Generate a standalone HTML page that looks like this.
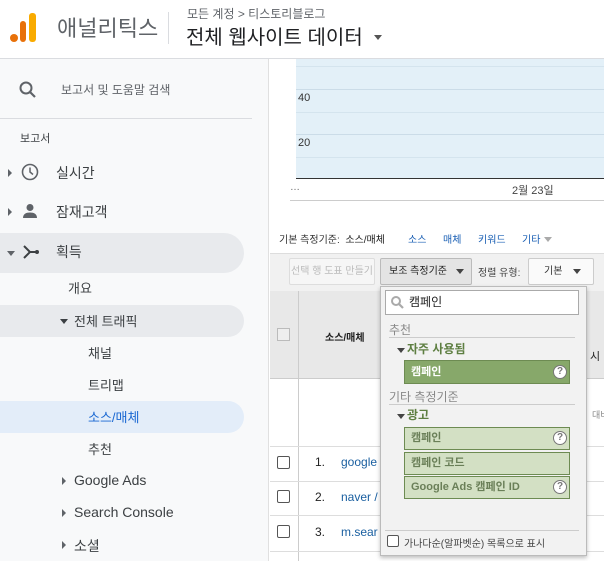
<!DOCTYPE html>
<html><head><meta charset="utf-8"><style>
*{margin:0;padding:0;box-sizing:border-box}
body{width:604px;height:561px;overflow:hidden;background:#fff;font-family:"Liberation Sans","Noto Sans CJK KR",sans-serif;position:relative;color:#333}
.a{position:absolute;white-space:nowrap}
.side{position:absolute;left:0;top:59px;width:268px;height:502px;background:#f8f9fa}
.nav{font-size:14px;color:#3c4043}
.tri{position:absolute;width:0;height:0}
.tr{border-top:4px solid transparent;border-bottom:4px solid transparent;border-left:4px solid #5f6368}
.td{border-left:4px solid transparent;border-right:4px solid transparent;border-top:5px solid #5f6368}
.g{border:1px solid #6d8b52}
.chk{position:absolute;width:13px;height:13px;border:1.5px solid #555;border-radius:2px;background:#fff}
.q{position:absolute;width:14px;height:14px;border-radius:50%;border:1.5px solid #777;background:#fff;font-size:10px;line-height:11px;text-align:center;color:#777;font-weight:bold}
</style></head><body>
<!-- header -->
<div class="a" style="left:10px;top:34px;width:8px;height:8px;background:#e8710a;border-radius:50%"></div>
<div class="a" style="left:20px;top:21px;width:6px;height:21px;background:#e8710a;border-radius:3px"></div>
<div class="a" style="left:29px;top:13px;width:7px;height:29px;background:#f9ab00;border-radius:3px"></div>
<div class="a" style="left:57px;top:11px;font-size:22px;color:#5f6368">애널리틱스</div>
<div class="a" style="left:168px;top:12px;width:1px;height:32px;background:#dadce0"></div>
<div class="a" style="left:187px;top:5px;font-size:12px;color:#5f6368">모든 계정 &gt; 티스토리블로그</div>
<div class="a" style="left:186px;top:21px;font-size:20px;color:#202124">전체 웹사이트 데이터</div>
<div class="tri td" style="left:374px;top:35px;border-top-color:#555"></div>
<div class="a" style="left:0;top:58px;width:604px;height:1px;background:#dadce0"></div>
<!-- sidebar -->
<div class="side"></div>
<svg class="a" style="left:18px;top:80px" width="20" height="20" viewBox="0 0 20 20"><circle cx="8" cy="8" r="5.5" fill="none" stroke="#5f6368" stroke-width="2"/><line x1="12" y1="12" x2="17" y2="17" stroke="#5f6368" stroke-width="2.2"/></svg>
<div class="a" style="left:61px;top:81px;font-size:12px;color:#5f6368">보고서 및 도움말 검색</div>
<div class="a" style="left:0;top:118px;width:252px;height:1px;background:#dadce0"></div>
<div class="a" style="left:20px;top:130px;font-size:11px;color:#3c4043">보고서</div>
<div class="tri tr" style="left:8px;top:169px"></div>
<svg class="a" style="left:21px;top:163px" width="18" height="18"><circle cx="9" cy="9" r="7.5" fill="none" stroke="#5f6368" stroke-width="1.6"/><path d="M9 4.5V9l3 2.5" fill="none" stroke="#5f6368" stroke-width="1.5"/></svg>
<div class="a nav" style="left:56px;top:163px">실시간</div>
<div class="tri tr" style="left:8px;top:208px"></div>
<svg class="a" style="left:22px;top:203px" width="16" height="16"><circle cx="8" cy="4.5" r="3.5" fill="#5f6368"/><path d="M1 15c0-4 3-5.5 7-5.5s7 1.5 7 5.5z" fill="#5f6368"/></svg>
<div class="a nav" style="left:56px;top:202px">잠재고객</div>
<div class="a" style="left:0;top:233px;width:244px;height:40px;background:#e8eaed;border-radius:0 20px 20px 0"></div>
<div class="tri td" style="left:7px;top:251px"></div>
<svg class="a" style="left:22px;top:244px" width="18" height="16"><path d="M2 2l6 6-6 6M8 8h7" fill="none" stroke="#3c4043" stroke-width="2"/><circle cx="15" cy="8" r="2" fill="#3c4043"/></svg>
<div class="a nav" style="left:56px;top:242px">획득</div>
<div class="a nav" style="left:68px;top:278px;font-size:13px">개요</div>
<div class="a" style="left:0;top:305px;width:244px;height:32px;background:#e8eaed;border-radius:0 16px 16px 0"></div>
<div class="tri td" style="left:60px;top:319px;border-top-color:#3c4043"></div>
<div class="a nav" style="left:74px;top:311px;font-size:13px">전체 트래픽</div>
<div class="a nav" style="left:88px;top:343px;font-size:13px">채널</div>
<div class="a nav" style="left:88px;top:375px;font-size:13px">트리맵</div>
<div class="a" style="left:0;top:401px;width:244px;height:32px;background:#e3edf9;border-radius:0 16px 16px 0"></div>
<div class="a nav" style="left:88px;top:407px;font-size:13px;color:#1967d2">소스/매체</div>
<div class="a nav" style="left:88px;top:439px;font-size:13px">추천</div>
<div class="tri tr" style="left:62px;top:477px"></div>
<div class="a nav" style="left:74px;top:472px">Google Ads</div>
<div class="tri tr" style="left:62px;top:509px"></div>
<div class="a nav" style="left:74px;top:504px">Search Console</div>
<div class="tri tr" style="left:62px;top:541px"></div>
<div class="a nav" style="left:74px;top:536px">소셜</div>
<div class="a" style="left:268px;top:59px;width:1px;height:502px;background:#e0e0e0"></div>
<!-- chart -->
<div class="a" style="left:296px;top:59px;width:308px;height:119px;background:#e3f0f8"></div>
<div class="a" style="left:296px;top:66px;width:308px;height:1px;background:#d4e4ee"></div>
<div class="a" style="left:296px;top:89px;width:308px;height:1px;background:#cbdce8"></div>
<div class="a" style="left:296px;top:112px;width:308px;height:1px;background:#d4e4ee"></div>
<div class="a" style="left:296px;top:134px;width:308px;height:1px;background:#cbdce8"></div>
<div class="a" style="left:296px;top:157px;width:308px;height:1px;background:#d4e4ee"></div>
<div class="a" style="left:296px;top:178px;width:308px;height:1px;background:#333"></div>
<div class="a" style="left:298px;top:92px;font-size:11px;color:#333">40</div>
<div class="a" style="left:298px;top:137px;font-size:11px;color:#333">20</div>
<div class="a" style="left:290px;top:182px;font-size:10px;color:#666">…</div>
<div class="a" style="left:512px;top:182px;font-size:11px;color:#444">2월 23일</div>
<div class="a" style="left:290px;top:200px;width:314px;height:1px;background:#ccc"></div>
<!-- dimension bar -->
<div class="a" style="left:279px;top:231px;font-size:10px;color:#333">기본 측정기준:&nbsp; <span style="color:#222">소스/매체</span></div>
<div class="a" style="left:408px;top:231px;font-size:10px;color:#1a5fb4">소스</div>
<div class="a" style="left:443px;top:231px;font-size:10px;color:#1a5fb4">매체</div>
<div class="a" style="left:478px;top:231px;font-size:10px;color:#1a5fb4">키워드</div>
<div class="a" style="left:522px;top:231px;font-size:10px;color:#1a5fb4">기타</div>
<div class="tri td" style="left:544px;top:237px;border-top-color:#aaa"></div>
<div class="a" style="left:270px;top:253px;width:334px;height:38px;background:#f1f1f1;border-top:1px solid #ddd"></div>
<div class="a" style="left:289px;top:258px;width:86px;height:27px;border:1px solid #ddd;border-radius:2px;font-size:10px;color:#bbb;line-height:25px;text-align:center;background:#f6f6f6">선택 행 도표 만들기</div>
<div class="a" style="left:380px;top:258px;width:92px;height:27px;border:1px solid #bbb;border-radius:2px;background:#e4e4e4;font-size:10px;color:#222;line-height:25px;padding-left:8px">보조 측정기준</div>
<div class="tri td" style="left:456px;top:269px;border-top-color:#444"></div>
<div class="a" style="left:478px;top:264px;font-size:10px;color:#444">정렬 유형:</div>
<div class="a" style="left:528px;top:258px;width:66px;height:27px;border:1px solid #ccc;border-radius:2px;background:#fafafa;font-size:10px;color:#333;line-height:25px;padding-left:15px">기본</div>
<div class="tri td" style="left:573px;top:269px;border-top-color:#444"></div>
<!-- table -->
<div class="a" style="left:270px;top:291px;width:334px;height:87px;background:#e8e8e8"></div>
<div class="a" style="left:298px;top:291px;width:1px;height:270px;background:#ccc"></div>
<div class="a" style="left:277px;top:328px;width:13px;height:13px;border:1px solid #bbb;background:#eee"></div>
<div class="a" style="left:325px;top:329px;font-size:10px;font-weight:bold;color:#222">소스/매체</div>
<div class="a" style="left:270px;top:378px;width:334px;height:1px;background:#ccc"></div>
<div class="a" style="left:592px;top:408px;font-size:9px;color:#888">대비</div>
<div class="a" style="left:590px;top:348px;font-size:11px;color:#222">시</div>
<div class="a" style="left:270px;top:446px;width:334px;height:1px;background:#ddd"></div>
<div class="a" style="left:270px;top:481px;width:334px;height:1px;background:#ddd"></div>
<div class="a" style="left:270px;top:515px;width:334px;height:1px;background:#ddd"></div>
<div class="a" style="left:270px;top:551px;width:334px;height:1px;background:#ddd"></div>
<div class="chk" style="left:277px;top:456px"></div>
<div class="chk" style="left:277px;top:490px"></div>
<div class="chk" style="left:277px;top:525px"></div>
<div class="a" style="left:315px;top:455px;font-size:12px;color:#222">1.</div>
<div class="a" style="left:315px;top:490px;font-size:12px;color:#222">2.</div>
<div class="a" style="left:315px;top:525px;font-size:12px;color:#222">3.</div>
<div class="a" style="left:341px;top:455px;font-size:12px;color:#1a5fa0">google</div>
<div class="a" style="left:341px;top:490px;font-size:12px;color:#1a5fa0">naver /</div>
<div class="a" style="left:341px;top:525px;font-size:12px;color:#1a5fa0">m.sear</div>
<!-- dropdown -->
<div class="a" style="left:380px;top:286px;width:207px;height:270px;background:#f2f2f2;border:1px solid #bbb;box-shadow:0 2px 4px rgba(0,0,0,.25)"></div>
<div class="a" style="left:385px;top:290px;width:194px;height:25px;background:#fff;border:1px solid #aaa"></div>
<svg class="a" style="left:390px;top:295px" width="14" height="14"><circle cx="6" cy="6" r="4" fill="none" stroke="#aaa" stroke-width="2"/><line x1="9" y1="9" x2="13" y2="13" stroke="#aaa" stroke-width="2.2"/></svg>
<div class="a" style="left:409px;top:293px;font-size:12px;color:#222">캠페인</div>
<div class="a" style="left:389px;top:321px;font-size:12px;color:#888">추천</div>
<div class="a" style="left:389px;top:337px;width:186px;height:1px;background:#ccc"></div>
<div class="tri td" style="left:397px;top:348px;border-top-color:#444"></div>
<div class="a" style="left:407px;top:340px;font-size:12px;font-weight:bold;color:#5e7f42">자주 사용됨</div>
<div class="a g" style="left:404px;top:360px;width:166px;height:24px;background:#87a86a;font-size:11px;font-weight:bold;color:#fff;line-height:22px;padding-left:6px">캠페인</div>
<div class="q" style="left:553px;top:365px">?</div>
<div class="a" style="left:389px;top:388px;font-size:12px;color:#888">기타 측정기준</div>
<div class="a" style="left:389px;top:404px;width:186px;height:1px;background:#ccc"></div>
<div class="tri td" style="left:397px;top:414px;border-top-color:#444"></div>
<div class="a" style="left:407px;top:406px;font-size:12px;font-weight:bold;color:#5e7f42">광고</div>
<div class="a g" style="left:404px;top:427px;width:166px;height:23px;background:#d3e0c4;font-size:11px;font-weight:bold;color:#6a7f58;line-height:21px;padding-left:6px">캠페인</div>
<div class="q" style="left:553px;top:431px">?</div>
<div class="a g" style="left:404px;top:452px;width:166px;height:23px;background:#d3e0c4;font-size:11px;font-weight:bold;color:#6a7f58;line-height:21px;padding-left:6px">캠페인 코드</div>
<div class="a g" style="left:404px;top:476px;width:166px;height:23px;background:#d3e0c4;font-size:11px;font-weight:bold;color:#6a7f58;line-height:21px;padding-left:6px">Google Ads 캠페인 ID</div>
<div class="q" style="left:553px;top:480px">?</div>
<div class="a" style="left:385px;top:530px;width:194px;height:1px;background:#ccc"></div>
<div class="a" style="left:387px;top:535px;width:12px;height:12px;border:1px solid #555;border-radius:2px;background:#fff"></div>
<div class="a" style="left:404px;top:535px;font-size:10px;color:#444">가나다순(알파벳순) 목록으로 표시</div>
</body></html>
